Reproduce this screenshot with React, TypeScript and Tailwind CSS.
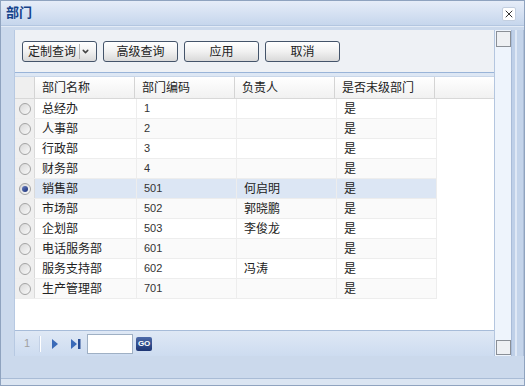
import { ChevronDown, X } from "lucide-react";

interface Dept {
  name: string;
  code: string;
  manager: string;
  leaf: string;
}

const depts: Dept[] = [
  { name: "总经办", code: "1", manager: "", leaf: "是" },
  { name: "人事部", code: "2", manager: "", leaf: "是" },
  { name: "行政部", code: "3", manager: "", leaf: "是" },
  { name: "财务部", code: "4", manager: "", leaf: "是" },
  { name: "销售部", code: "501", manager: "何启明", leaf: "是" },
  { name: "市场部", code: "502", manager: "郭晓鹏", leaf: "是" },
  { name: "企划部", code: "503", manager: "李俊龙", leaf: "是" },
  { name: "电话服务部", code: "601", manager: "", leaf: "是" },
  { name: "服务支持部", code: "602", manager: "冯涛", leaf: "是" },
  { name: "生产管理部", code: "701", manager: "", leaf: "是" },
];

const selected = 4;

function Radio({ checked }: { checked: boolean }) {
  return (
    <span className="w-[12px] h-[12px] rounded-full border border-[#a4a4a4] bg-gradient-to-br from-[#d8d8d8] to-[#fafafa] flex items-center justify-center">
      {checked && (
        <span className="w-[6px] h-[6px] rounded-full bg-gradient-to-br from-[#6a7fc0] to-[#1c2f78]" />
      )}
    </span>
  );
}

function Btn({ label, dropdown }: { label: string; dropdown?: boolean }) {
  return (
    <button className="h-[21px] w-[75px] rounded-[3px] border border-[#44546a] bg-gradient-to-b from-[#ffffff] via-[#f1f1f1] to-[#d9d9d9] text-[12px] text-[#222] flex items-center justify-center">
      {dropdown ? (
        <span className="flex items-center w-full pl-[5px]">
          <span>{label}</span>
          <span className="ml-[3px] h-[15px] border-l border-[#b5b5b5] flex items-center pl-[1px]">
            <ChevronDown size={9} strokeWidth={4} className="text-[#444]" />
          </span>
        </span>
      ) : (
        label
      )}
    </button>
  );
}

export default function App() {
  return (
    <div className="w-[525px] h-[386px] border border-[#8fa3bf] bg-[#cbd9ec] flex flex-col font-['Liberation_Sans','Noto_Sans_CJK_SC',sans-serif] text-[12px] text-[#222]">
      <div className="h-[24px] bg-gradient-to-b from-[#e6edf8] to-[#c6d6ec] flex items-center justify-between pl-[5px] pr-[8px]">
        <span className="font-bold text-[13px] text-[#15428b]">部门</span>
        <span className="w-[14px] h-[14px] mt-[1px] bg-white border border-[#c3cfe0] rounded-[2px] flex items-center justify-center">
          <X size={12} strokeWidth={2} className="text-[#333]" />
        </span>
      </div>

      <div className="flex-1 flex flex-col border-t border-[#b3c6e0]">
        <div className="flex pt-[3px] border-t border-[#e3ebf6]">
          <div className="w-[14px] border-r border-[#b7c9e2] bg-[#cbd9ec]" />

          <div className="w-[479px] flex flex-col">
            <div className="h-[42px] bg-[#eef1f5] flex items-center gap-[6px] pl-[7px] pt-[1px]">
              <Btn label="定制查询" dropdown />
              <Btn label="高级查询" />
              <Btn label="应用" />
              <Btn label="取消" />
            </div>

            <div className="h-[258px] bg-white flex flex-col border-t border-[#99b4d8]">
              <div className="h-[4px] bg-[#dde7f4] border-b border-[#c9d7e9]" />
              <div className="h-[22px] flex bg-gradient-to-b from-[#ffffff] to-[#f1f1f1] border-b border-[#d8d8d8]">
                <div className="w-[20px] bg-[#efefef] border-r border-[#d4d4d4]" />
                {["部门名称", "部门编码", "负责人", "是否末级部门"].map((h) => (
                  <div
                    key={h}
                    className="w-[100px] first:w-[102px] border-r border-[#d4d4d4] pl-[7px] flex items-center"
                  >
                    {h}
                  </div>
                ))}
                <div className="flex-1" />
              </div>

              {depts.map((d, i) => (
                <div
                  key={d.name}
                  className={`h-[20px] w-[422px] flex border-b border-[#ededed] ${
                    i === selected ? "bg-[#dce6f4]" : i % 2 === 1 ? "bg-[#fafafa]" : "bg-white"
                  }`}
                >
                  <div className="w-[20px] bg-[#efefef] border-r border-[#dadada] flex items-center justify-center">
                    <Radio checked={i === selected} />
                  </div>
                  <div className="w-[102px] border-r border-[#ededed] pl-[7px] flex items-center">
                    {d.name}
                  </div>
                  <div className="w-[100px] border-r border-[#ededed] pl-[7px] flex items-center text-[11px] text-[#333]">
                    {d.code}
                  </div>
                  <div className="w-[100px] border-r border-[#ededed] pl-[7px] flex items-center">
                    {d.manager}
                  </div>
                  <div className="w-[100px] border-r border-[#ededed] pl-[7px] flex items-center">
                    {d.leaf}
                  </div>
                </div>
              ))}
            </div>

            <div className="h-[26px] bg-gradient-to-b from-[#dfe8f5] to-[#cddcf0] border-t border-[#a7bcd9] flex items-center pl-[9px]">
              <span className="text-[11px] text-[#a0a0a0]">1</span>
              <span className="ml-[9px] h-[16px] border-l border-[#c3d1e6] border-r border-r-white" />
              <svg width="8" height="12" viewBox="0 0 8 12" className="ml-[10px]">
                <path d="M1 1 L7 6 L1 11 Z" fill="#3a6ab8" />
              </svg>
              <svg width="12" height="12" viewBox="0 0 12 12" className="ml-[11px]">
                <path d="M1 1 L7 6 L1 11 Z" fill="#3a6ab8" />
                <rect x="8" y="1" width="2.5" height="10" fill="#2a4f96" />
              </svg>
              <div className="ml-[5px] w-[46px] h-[20px] bg-white border border-[#9fb0c4]" />
              <span className="ml-[3px] w-[16px] h-[14px] rounded-[2px] bg-gradient-to-b from-[#4d6aa8] to-[#1d3574] text-white text-[8px] font-bold flex items-center justify-center">
                GO
              </span>
            </div>
          </div>

          <div className="w-[17px] h-[326px] bg-[#eef4fc] border-l border-[#b4c6df] flex flex-col justify-between items-center py-[1px]">
            <div className="w-[15px] h-[16px] border border-[#8a8f96] bg-[#eef0f3]" />
            <div className="w-[15px] h-[15px] border border-[#8a8f96] bg-[#eef0f3]" />
          </div>

          <div className="flex-1 flex">
            <div className="w-[4px] bg-[#bfd0e8] border-l border-[#a9bcd8]" />
            <div className="w-[2px] bg-[#dfe8f5]" />
            <div className="flex-1 bg-[#c4d4ea] border-r border-[#aebfd8]" />
          </div>
        </div>

        <div className="flex-1 flex flex-col">
          <div className="h-[23px] border-b border-[#a9bcd6]" />
          <div className="flex-1 bg-[#dbe5f2]" />
        </div>
      </div>
    </div>
  );
}
